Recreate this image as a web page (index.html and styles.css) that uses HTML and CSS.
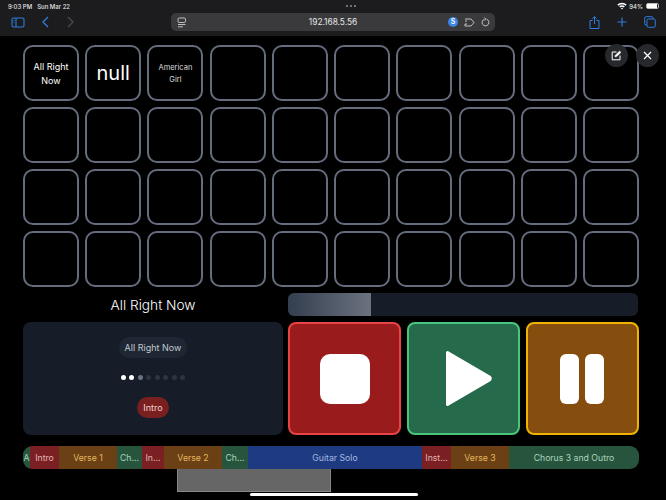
FILE: index.html
```html
<!DOCTYPE html>
<html>
<head>
    <meta charset="UTF-8">
    <title>Song Board</title>
    <link rel="stylesheet" href="styles.css">
</head>
<body>
    <div class="browser">
        <div class="status-row">
            <div class="clock"><span>9:03 PM</span><span>Sun Mar 22</span></div>
            <div class="status-dots"><i></i><i></i><i></i></div>
            <div class="battery">
                <svg width="10" height="8" viewBox="0 0 10 8"><path d="M0.3 2.6a6.6 6.6 0 0 1 9.4 0L8.6 3.8a5 5 0 0 0-7.2 0zM2.2 4.5a4 4 0 0 1 5.6 0L6.7 5.6a2.4 2.4 0 0 0-3.4 0zM3.9 6.3a1.5 1.5 0 0 1 2.2 0L5 7.6z" fill="#fff"/></svg>
                <span>94%</span>
                <div class="battery-body"><div class="battery-level"></div></div>
            </div>
        </div>
        <div class="nav-row">
            <div class="nav-left">
                <svg width="14" height="11" viewBox="0 0 14 11" fill="none" stroke="#2f7de1" stroke-width="1.1"><rect x="1" y="1" width="12" height="9" rx="1.5"/><path d="M5 1v9"/><path d="M2.5 3.5h1M2.5 5.5h1" stroke-width="0.8"/></svg>
                <svg class="back" width="7" height="12" viewBox="0 0 7 12" fill="none" stroke="#2f7de1" stroke-width="1.3"><path d="M6 1 1 6l5 5"/></svg>
                <svg class="forward" width="7" height="12" viewBox="0 0 7 12" fill="none" stroke="#4a4a4c" stroke-width="1.3"><path d="m1 1 5 5-5 5"/></svg>
            </div>
            <div class="address">
                <svg class="page-icon" width="10" height="11" viewBox="0 0 10 11" fill="none" stroke="#d0d0d2" stroke-width="0.9"><rect x="1" y="1" width="7.5" height="4.5" rx="1.2"/><path d="M1 7.5h7.5M1 9.8h5"/></svg>
                <span class="url">192.168.5.56</span>
                <div class="address-icons">
                    <span class="ext-badge">S</span>
                    <svg width="11" height="9" viewBox="0 0 11 9" fill="none" stroke="#d0d0d2" stroke-width="0.9"><path d="M1 1h6l3 3.5L7 8H1V6h2M1 3h2"/></svg>
                    <svg width="9" height="10" viewBox="0 0 9 10" fill="none" stroke="#d0d0d2" stroke-width="0.9"><path d="M5.6 2.2a3.4 3.4 0 1 1-2.2 0"/><path d="M3.4 0.6 5 2.1 3.6 3.6"/></svg>
                </div>
            </div>
            <div class="nav-right">
                <svg width="11" height="13" viewBox="0 0 11 13" fill="none" stroke="#2f7de1" stroke-width="1"><path d="M3.5 4.5H1v8h9v-8H7.5M5.5 8V0.8M3.3 2.8 5.5 0.7l2.2 2.1"/></svg>
                <svg width="10" height="10" viewBox="0 0 10 10" fill="none" stroke="#2f7de1" stroke-width="1.1"><path d="M5 0.5v9M0.5 5h9"/></svg>
                <svg width="12" height="12" viewBox="0 0 12 12" fill="none" stroke="#2f7de1" stroke-width="1"><rect x="3" y="3" width="8.3" height="8.3" rx="1.5"/><path d="M3 9H2.2A1.5 1.5 0 0 1 .7 7.5V2.2A1.5 1.5 0 0 1 2.2.7h5.3A1.5 1.5 0 0 1 9 2.2V3"/></svg>
            </div>
        </div>
    </div>

    <div class="page">
        <div class="floating-actions">
            <button class="round-btn">
                <svg width="11" height="11" viewBox="0 0 11 11" fill="none" stroke="#fff" stroke-width="1"><path d="M5.5 2H1.2v7.8H9V5.5"/><path d="M3.9 7 4.3 5.2 8.6 1l1.4 1.4L5.7 6.6z" fill="#fff" stroke-width="0.4"/></svg>
            </button>
            <button class="round-btn">
                <svg width="9" height="9" viewBox="0 0 9 9" fill="none" stroke="#fff" stroke-width="1.2"><path d="m1 1 7 7M8 1 1 8"/></svg>
            </button>
        </div>

        <div class="pad-grid">
            <div class="pad pad-text">All Right Now</div>
            <div class="pad pad-null">null</div>
            <div class="pad pad-small">American Girl</div>
            <div class="pad"></div><div class="pad"></div><div class="pad"></div><div class="pad"></div><div class="pad"></div><div class="pad"></div><div class="pad"></div>
            <div class="pad"></div><div class="pad"></div><div class="pad"></div><div class="pad"></div><div class="pad"></div><div class="pad"></div><div class="pad"></div><div class="pad"></div><div class="pad"></div><div class="pad"></div>
            <div class="pad"></div><div class="pad"></div><div class="pad"></div><div class="pad"></div><div class="pad"></div><div class="pad"></div><div class="pad"></div><div class="pad"></div><div class="pad"></div><div class="pad"></div>
            <div class="pad"></div><div class="pad"></div><div class="pad"></div><div class="pad"></div><div class="pad"></div><div class="pad"></div><div class="pad"></div><div class="pad"></div><div class="pad"></div><div class="pad"></div>
        </div>

        <div class="player">
            <div class="song-title">All Right Now</div>
            <div class="progress"><div class="progress-fill"></div></div>

            <div class="now-panel">
                <div class="chip">All Right Now</div>
                <div class="dots">
                    <i class="on"></i><i class="on"></i><i class="half"></i><i></i><i></i><i></i><i></i><i></i>
                </div>
                <div class="chip chip-red">Intro</div>
            </div>

            <div class="transport">
                <button class="big-btn stop"><div class="stop-icon"></div></button>
                <button class="big-btn play">
                    <svg width="47" height="57" viewBox="0 0 47 57"><path d="M2.5 2.5 44.5 27a1.8 1.8 0 0 1 0 3L2.5 54.5z" fill="#fff" stroke="#fff" stroke-width="3" stroke-linejoin="round"/></svg>
                </button>
                <button class="big-btn pause"><div class="pause-bar"></div><div class="pause-bar"></div></button>
            </div>
        </div>

        <div class="timeline">
            <div class="seg green" style="width:7px">A</div>
            <div class="seg red" style="width:29px">Intro</div>
            <div class="seg brown" style="width:58px">Verse 1</div>
            <div class="seg green" style="width:25px">Ch...</div>
            <div class="seg red" style="width:22px">In...</div>
            <div class="seg brown" style="width:58px">Verse 2</div>
            <div class="seg green" style="width:26px">Ch...</div>
            <div class="seg blue" style="width:174px">Guitar Solo</div>
            <div class="seg red" style="width:29px">Inst...</div>
            <div class="seg brown" style="width:58px">Verse 3</div>
            <div class="seg green" style="width:130px">Chorus 3 and Outro</div>
        </div>
    </div>

    <div class="gray-box"></div>
    <div class="home-bar"></div>
</body>
</html>
```

FILE: styles.css
```css
* {
    box-sizing: border-box;
}
html, body {
    height: 100%;
}
body {
    margin: 0;
    width: 666px;
    height: 500px;
    overflow: hidden;
    position: relative;
    background: #000;
    color: #fff;
    font-family: Inter, "Liberation Sans", sans-serif;
}
button {
    border: none;
    padding: 0;
    cursor: pointer;
}

/* safari chrome */
.browser {
    height: 36px;
    background: #1c1c1e;
    padding: 0 0 0 8px;
}
.status-row {
    height: 12px;
    display: flex;
    align-items: center;
    justify-content: space-between;
    font-size: 6px;
    font-weight: 500;
    color: #e4e4e6;
    padding: 0 7px 0 0;
}
.clock {
    display: flex;
    gap: 5px;
}
.status-dots {
    display: flex;
    gap: 2px;
    margin-left: 15px;
}
.status-dots i {
    width: 2px;
    height: 2px;
    border-radius: 50%;
    background: #8e8e90;
}
.battery {
    display: flex;
    align-items: center;
    gap: 2px;
}
.battery-body {
    width: 13px;
    height: 6px;
    border: 1px solid #bbb;
    border-radius: 2px;
    margin-left: 1px;
}
.battery-level {
    width: 90%;
    height: 100%;
    background: #fff;
}
.nav-row {
    height: 24px;
    display: flex;
    align-items: center;
    padding-bottom: 4px;
}
.nav-left {
    width: 163px;
    display: flex;
    align-items: center;
    padding-left: 3px;
}
.back {
    margin-left: 17px;
}
.forward {
    margin-left: 18px;
}
.address {
    width: 324px;
    height: 18px;
    background: #3a3a3c;
    border-radius: 5px;
    display: flex;
    align-items: center;
    position: relative;
    padding: 0 5px 0 6px;
}
.url {
    position: absolute;
    left: 0;
    right: 0;
    text-align: center;
    font-size: 8.3px;
    color: #e8e8ea;
}
.address-icons {
    margin-left: auto;
    display: flex;
    align-items: center;
    gap: 6px;
    position: relative;
}
.ext-badge {
    width: 10px;
    height: 10px;
    border-radius: 50%;
    background: #3d86e6;
    font-size: 7px;
    font-weight: 600;
    text-align: center;
    line-height: 10px;
}
.nav-right {
    display: flex;
    align-items: center;
    gap: 17px;
    margin-left: 94px;
}

/* page */
.page {
    width: 666px;
    padding: 9px 27px 0 23px;
    position: relative;
}
.floating-actions {
    position: absolute;
    top: 8px;
    right: 7px;
    display: flex;
    gap: 8px;
}
.round-btn {
    width: 23px;
    height: 23px;
    border-radius: 50%;
    background: #26282c;
    display: flex;
    align-items: center;
    justify-content: center;
}
.pad-grid {
    display: grid;
    grid-template-columns: repeat(10, 56px);
    grid-auto-rows: 56px;
    column-gap: 6.22px;
    row-gap: 6px;
}
.pad {
    border: 2px solid #646c7e;
    border-radius: 10px;
    display: flex;
    align-items: center;
    justify-content: center;
    text-align: center;
}
.pad-text {
    font-size: 9px;
    line-height: 14px;
    padding: 1px 6px 0;
}
.pad-null {
    font-size: 20px;
}
.pad-small {
    font-size: 7.5px;
    line-height: 12px;
    padding: 2px 6px 0;
    color: #ddd;
}

.player {
    display: grid;
    grid-template-columns: 260px 350px;
    grid-template-rows: 23px 113px;
    column-gap: 5px;
    row-gap: 6px;
    margin-top: 6px;
}
.song-title {
    text-align: center;
    font-size: 13.7px;
    font-weight: 300;
    line-height: 24px;
}
.progress {
    background: #161d28;
    border-radius: 6px;
    overflow: hidden;
}
.progress-fill {
    width: 83px;
    height: 100%;
    background: linear-gradient(90deg, #333e4e, #6b7280);
}
.now-panel {
    background: #161d28;
    border-radius: 8px;
    display: flex;
    flex-direction: column;
    align-items: center;
    padding-top: 15px;
}
.chip {
    height: 21px;
    line-height: 21px;
    padding: 0 6px;
    border-radius: 11px;
    background: #1e2733;
    color: #c3c7cf;
    font-size: 9px;
}
.chip-red {
    background: #7a1f1f;
    color: #f0d4d4;
}
.dots {
    display: flex;
    gap: 3.5px;
    margin: 17px 0 17px;
}
.dots i {
    width: 5px;
    height: 5px;
    border-radius: 50%;
    background: #2f3540;
}
.dots i.on {
    background: #fff;
}
.dots i.half {
    background: #6b7280;
}
.transport {
    display: grid;
    grid-template-columns: repeat(3, 113px);
    column-gap: 5.8px;
}
.big-btn {
    border: 2px solid;
    border-radius: 8px;
    display: flex;
    align-items: center;
    justify-content: center;
}
.stop {
    background: #991b1b;
    border-color: #e94444;
}
.play {
    background: #266a4c;
    border-color: #48c67c;
    padding-left: 10px;
}
.pause {
    background: #854d0e;
    border-color: #f0b400;
    gap: 6px;
}
.stop-icon {
    width: 50px;
    height: 50px;
    border-radius: 10px;
    background: #fff;
}
.pause-bar {
    width: 19px;
    height: 50px;
    border-radius: 6px;
    background: #fff;
}

.timeline {
    display: flex;
    height: 23px;
    margin-top: 11px;
    border-radius: 9px;
    overflow: hidden;
    width: 616px;
    font-size: 8.7px;
}
.seg {
    flex: none;
    text-align: center;
    line-height: 24px;
    white-space: nowrap;
    overflow: hidden;
}
.red {
    background: #7a2023;
    color: #e0b4b4;
}
.brown {
    background: #6b4015;
    color: #e3b75e;
}
.green {
    background: #27543c;
    color: #a9d5bd;
}
.blue {
    background: #1e3a80;
    color: #a5b9e4;
}

/* overlays */
.gray-box {
    position: absolute;
    left: 177px;
    top: 469px;
    width: 154px;
    height: 23px;
    background: #666;
    border-right: 1px solid #888;
    border-bottom: 1px solid #888;
    border-left: 1px solid #888;
}
.home-bar {
    position: absolute;
    left: 250px;
    top: 493px;
    width: 168px;
    height: 3px;
    border-radius: 2px;
    background: #fff;
}
```
